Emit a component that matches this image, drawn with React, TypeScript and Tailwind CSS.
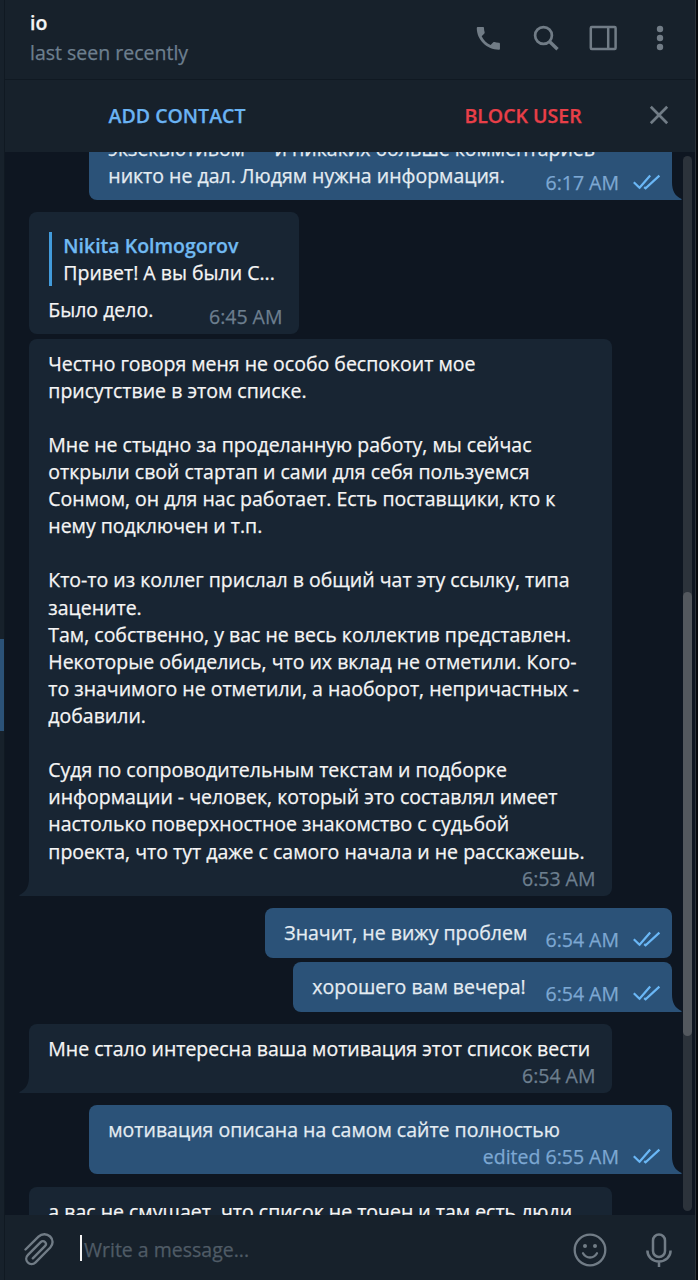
import type { ReactNode } from 'react';

type Message = {
  id: number;
  out?: boolean;
  tail?: boolean;
  lines: string[];
  time: string;
  box: string;
  inline?: boolean;
  reply?: { name: string; text: string };
};

const messages: Message[] = [
  {
    id: 1,
    out: true,
    tail: true,
    inline: true,
    lines: [
      'экзекьютивом — и никаких больше комментариев',
      'никто не дал. Людям нужна информация.',
    ],
    time: '6:17 AM',
    box: 'w-[583px] h-[76px] -mt-[28px]',
  },
  {
    id: 2,
    inline: true,
    reply: { name: 'Nikita Kolmogorov', text: 'Привет! А вы были С...' },
    lines: ['Было дело.'],
    time: '6:45 AM',
    box: 'w-[270px] h-[122px] mt-[12px]',
  },
  {
    id: 3,
    tail: true,
    lines: [
      'Честно говоря меня не особо беспокоит мое',
      'присутствие в этом списке.',
      '',
      'Мне не стыдно за проделанную работу, мы сейчас',
      'открыли свой стартап и сами для себя пользуемся',
      'Сонмом, он для нас работает. Есть поставщики, кто к',
      'нему подключен и т.п.',
      '',
      'Кто-то из коллег прислал в общий чат эту ссылку, типа',
      'зацените.',
      'Там, собственно, у вас не весь коллектив представлен.',
      'Некоторые обиделись, что их вклад не отметили. Кого-',
      'то значимого не отметили, а наоборот, непричастных -',
      'добавили.',
      '',
      'Судя по сопроводительным текстам и подборке',
      'информации - человек, который это составлял имеет',
      'настолько поверхностное знакомство с судьбой',
      'проекта, что тут даже с самого начала и не расскажешь.',
    ],
    time: '6:53 AM',
    box: 'w-[583px] h-[557px] mt-[5px]',
  },
  {
    id: 4,
    out: true,
    inline: true,
    lines: ['Значит, не вижу проблем'],
    time: '6:54 AM',
    box: 'w-[407px] h-[50px] mt-[12px]',
  },
  {
    id: 5,
    out: true,
    tail: true,
    inline: true,
    lines: ['хорошего вам вечера!'],
    time: '6:54 AM',
    box: 'w-[379px] h-[50px] mt-[4px]',
  },
  {
    id: 6,
    tail: true,
    lines: ['Мне стало интересна ваша мотивация этот список вести'],
    time: '6:54 AM',
    box: 'w-[583px] h-[69px] mt-[12px]',
  },
  {
    id: 7,
    out: true,
    tail: true,
    lines: ['мотивация описана на самом сайте полностью'],
    time: 'edited 6:55 AM',
    box: 'w-[583px] h-[69px] mt-[12px]',
  },
  {
    id: 8,
    tail: true,
    lines: ['а вас не смущает, что список не точен и там есть люди'],
    time: '',
    box: 'w-[583px] h-[69px] mt-[13px]',
  },
];

const Checks = () => (
  <svg className="ml-[14px] -mt-px w-[28px] h-[16px]" viewBox="0 0 28 16" fill="none" stroke="#6ab7f6" strokeWidth="2.2">
    <path d="M.8 8.2l5.7 5.6M5.9 14.400L17.200 1.600M11.200 13.200l1.400 1.200L26.400 1.600" />
  </svg>
);

const Tail = ({ out }: { out?: boolean }) =>
  out ? (
    <svg className="absolute left-full bottom-0 w-[10px] h-[18px]" viewBox="0 0 10 18" fill="#2b5278">
      <path d="M0 0C0 9 3 14 9.6 17Q10 18 9 18H0z" />
    </svg>
  ) : (
    <svg className="absolute right-full bottom-0 w-[10px] h-[18px]" viewBox="0 0 10 18" fill="#182533">
      <path d="M10 0C10 9 7 14 .4 17Q0 18 1 18H10z" />
    </svg>
  );

const Bubble = ({ msg }: { msg: Message }) => {
  const { out, tail, inline, reply } = msg;
  const corner = tail ? (out ? 'rounded-br-none' : 'rounded-bl-none') : '';
  return (
    <div
      className={`relative shrink-0 flex flex-col rounded-[8px] pt-[10.6px] pb-[4px] pl-[19.3px] ${msg.box} ${corner} ${
        out ? 'self-end bg-[#2b5278] text-[#e4ecf2] pr-[11px]' : 'self-start bg-[#182533] text-[#f5f5f5] pr-[16.5px]'
      }`}
    >
      {reply && (
        <div className="mt-[9.4px] mb-[9.5px] ml-[1px] border-l-[3px] border-[#429bdb] pl-[11px]">
          <div className="font-semibold text-[#71baf2]">{reply.name}</div>
          <div>{reply.text}</div>
        </div>
      )}
      <div className={inline ? 'flex justify-between items-end' : 'flex flex-col'}>
        <div className={inline ? 'min-w-0 pb-[7px]' : ''}>
          {msg.lines.map((line, i) => (
            <div key={i} className="h-[27.11px] whitespace-nowrap">
              {line}
            </div>
          ))}
        </div>
        {msg.time && (
          <div
            className={`shrink-0 flex items-center self-end whitespace-nowrap ${
              out ? 'text-[#7da8d3]' : 'text-[#6d7f8f]'
            }`}
          >
            {msg.time}
            {out && <Checks />}
          </div>
        )}
      </div>
      {tail && <Tail out={out} />}
    </div>
  );
};

const IconButton = ({ className, children }: { className: string; children: ReactNode }) => (
  <button className={`shrink-0 text-[#717c86] ${className}`}>{children}</button>
);

const Header = () => (
  <header className="h-[80px] shrink-0 flex items-center bg-[#17212b] border-b border-[#101922] pl-[25px] pr-[31px]">
    <div className="flex-1 -mt-[3px]">
      <div className="h-[30px] font-semibold text-[#f5f5f5]">io</div>
      <div className="h-[29px] text-[#6d7f8f]">last seen recently</div>
    </div>
    <IconButton className="mr-[32px] -mt-[3px]">
      <svg className="w-[25px] h-[25px]" viewBox="0 0 26 26" fill="currentColor">
        <path d="M2 1h5.2c.7 0 1.1.4 1.1 1.1 0 1.6.3 3 .7 4.4.1.5 0 .9-.3 1.200L5.900 10.600c2 4 5.200 7.200 9.300 9.200l2.800-2.900c.4-.3.8-.4 1.200-.3 1.400.5 2.900.7 4.500.7.7 0 1.200.5 1.200 1.200v5.100c0 .7-.5 1.200-1.200 1.200C11.400 24.800.8 14.500.8 2.200.8 1.500 1.300 1 2 1z" />
      </svg>
    </IconButton>
    <IconButton className="mr-[30px] -mt-[3px]">
      <svg className="w-[26px] h-[26px]" viewBox="0 0 26 26" fill="none" stroke="currentColor">
        <circle cx="10.500" cy="10.500" r="8.400" strokeWidth="2.700" />
        <path d="M16.500 16.500l8 7.800" strokeWidth="3.400" />
      </svg>
    </IconButton>
    <IconButton className="mr-[39px] -mt-[3px]">
      <svg className="w-[28px] h-[26px]" viewBox="0 0 28 26" fill="none" stroke="currentColor" strokeWidth="2.500">
        <rect x="1.800" y="2" width="24.800" height="22" rx="1" />
        <path d="M19.200 2v22" />
      </svg>
    </IconButton>
    <IconButton className="-mt-[3px]">
      <svg className="w-[8px] h-[26px]" viewBox="0 0 8 26" fill="currentColor">
        <circle cx="4" cy="4" r="3.200" />
        <circle cx="4" cy="13" r="3.200" />
        <circle cx="4" cy="22" r="3.200" />
      </svg>
    </IconButton>
  </header>
);

const ContactBar = () => (
  <div className="h-[72px] shrink-0 flex items-center bg-[#17212b] pr-[26px] font-semibold">
    <button className="w-[344px] h-full text-[#6ab3f3]">ADD CONTACT</button>
    <button className="w-[348px] shrink-0 h-full text-[#e83f48]">BLOCK USER</button>
    <IconButton className="-ml-[48px] -mt-[3px]">
      <svg className="w-[20px] h-[20px]" viewBox="0 0 20 20" fill="none" stroke="currentColor" strokeWidth="2.700">
        <path d="M1.800 1.800l16.400 16.400M18.200 1.800L1.800 18.200" />
      </svg>
    </IconButton>
  </div>
);

const Composer = () => (
  <footer className="h-[65px] shrink-0 flex items-center bg-[#17212b] pl-[18px] pr-[22px] pt-[4px]">
    <IconButton className="">
      <svg
        className="w-[32px] h-[34px]"
        viewBox="0 0 32 34"
        fill="none"
        stroke="currentColor"
        strokeWidth="2.400"
        strokeLinecap="round"
        strokeLinejoin="round"
      >
        <path d="M2.500 16.500L15.500 3.700c3.600-3.500 8.500-3 11.600-.2 3.200 3 3.300 7.800.2 11L12.600 29.300c-2.300 2.300-5.700 2.300-7.800.2-2.100-2.100-2.100-5.400.2-7.700L17.700 9.100c1.300-1.300 3.200-1.200 4.300-.1s1.200 2.900-.1 4.200L9.800 25.300" />
      </svg>
    </IconButton>
    <div className="ml-[25px] w-[2px] h-[26px] -mt-[3px] bg-[#f5f5f5]" />
    <div className="flex-1 ml-[2px] pt-px text-[#4f5b66]">Write a message...</div>
    <IconButton className="mr-[38px]">
      <svg className="w-[34px] h-[34px]" viewBox="0 0 34 34" fill="none" stroke="currentColor" strokeWidth="2.300">
        <circle cx="17" cy="17" r="15.300" />
        <path d="M10 20.300c3.200 5.600 10.800 5.600 14 0" strokeLinecap="round" />
        <circle cx="12" cy="13" r="2" fill="currentColor" stroke="none" />
        <circle cx="22" cy="13" r="2" fill="currentColor" stroke="none" />
      </svg>
    </IconButton>
    <IconButton className="">
      <svg className="w-[28px] h-[34px]" viewBox="0 0 28 34" fill="none" stroke="currentColor" strokeWidth="2.500">
        <rect x="8" y="1.500" width="12" height="22.500" rx="6" />
        <path d="M2.400 17.500c0 6.500 5 11 11.600 11s11.600-4.500 11.600-11M14 28.500V34" />
      </svg>
    </IconButton>
  </footer>
);

const App = () => (
  <div className="flex w-[698px] h-[1280px] overflow-hidden bg-[#0e1621] font-['Open_Sans',sans-serif] text-[19.5px] leading-[27.11px] [-webkit-text-stroke:0.25px]">
    <div className="w-[5px] shrink-0 bg-[#17212b] border-r border-[#101922] pt-[639px]">
      <div className="h-[92px] bg-[#2b5278]" />
    </div>
    <main className="w-[690px] shrink-0 flex flex-col">
      <Header />
      <ContactBar />
      <div className="h-[1063px] shrink-0 flex overflow-hidden">
        <div className="w-[643px] ml-[24px] shrink-0 flex flex-col">
          {messages.map((msg) => (
            <Bubble key={msg.id} msg={msg} />
          ))}
        </div>
        <div className="w-[9px] h-[1055px] mt-[4px] ml-[11px] rounded-full bg-[#2c333b] pt-[436px]">
          <div className="h-[444px] rounded-full bg-[#53585e]" />
        </div>
      </div>
      <Composer />
    </main>
    <div className="w-[3px] shrink-0 bg-[#05080c] border-l border-[#2c333a]" />
  </div>
);

export default App;
